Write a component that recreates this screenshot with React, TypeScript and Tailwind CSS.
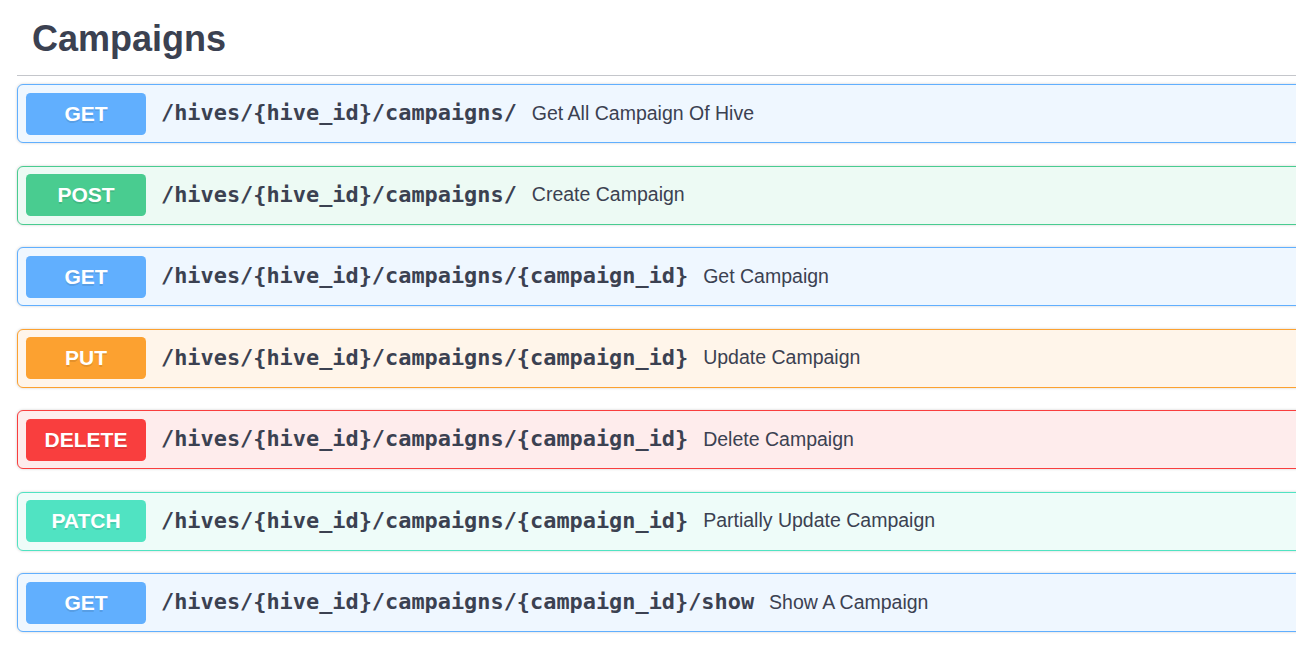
const ops = [
  {
    method: "GET",
    path: "/hives/{hive_id}/campaigns/",
    summary: "Get All Campaign Of Hive",
    box: "border-[#61affe] bg-[#eff7ff]",
    badge: "bg-[#61affe]",
  },
  {
    method: "POST",
    path: "/hives/{hive_id}/campaigns/",
    summary: "Create Campaign",
    box: "border-[#49cc90] bg-[#edfaf4]",
    badge: "bg-[#49cc90]",
  },
  {
    method: "GET",
    path: "/hives/{hive_id}/campaigns/{campaign_id}",
    summary: "Get Campaign",
    box: "border-[#61affe] bg-[#eff7ff]",
    badge: "bg-[#61affe]",
  },
  {
    method: "PUT",
    path: "/hives/{hive_id}/campaigns/{campaign_id}",
    summary: "Update Campaign",
    box: "border-[#fca130] bg-[#fff5ea]",
    badge: "bg-[#fca130]",
  },
  {
    method: "DELETE",
    path: "/hives/{hive_id}/campaigns/{campaign_id}",
    summary: "Delete Campaign",
    box: "border-[#f93e3e] bg-[#feecec]",
    badge: "bg-[#f93e3e]",
  },
  {
    method: "PATCH",
    path: "/hives/{hive_id}/campaigns/{campaign_id}",
    summary: "Partially Update Campaign",
    box: "border-[#50e3c2] bg-[#eefcf9]",
    badge: "bg-[#50e3c2]",
  },
  {
    method: "GET",
    path: "/hives/{hive_id}/campaigns/{campaign_id}/show",
    summary: "Show A Campaign",
    box: "border-[#61affe] bg-[#eff7ff]",
    badge: "bg-[#61affe]",
  },
];

export default function App() {
  return (
    <div className="min-h-screen w-full overflow-hidden bg-white text-[#3b4151]">
      <div className="w-[1340px] pl-[17px]">
        {/* Tag header */}
        <div className="border-b border-[#c4c6cb] pt-[18px] pb-[16px] pl-[15px]">
          <h3 className="text-[36px] leading-[41px] font-bold font-['Liberation_Sans',Arial,sans-serif]">
            Campaigns
          </h3>
        </div>

        {/* Operations */}
        <div className="mt-[8px] flex flex-col gap-[22.5px]">
          {ops.map((op, i) => (
            <div
              key={i}
              className={`flex h-[59px] items-center rounded-[6px] border pl-[8px] shadow-[0_0_3px_rgba(0,0,0,0.19)] ${op.box}`}
            >
              <span
                className={`flex h-[42px] w-[120px] shrink-0 items-center justify-center rounded-[4.5px] text-[21px] font-bold text-white font-['Liberation_Sans',Arial,sans-serif] [text-shadow:0_1.5px_0_rgba(0,0,0,0.1)] ${op.badge}`}
              >
                {op.method}
              </span>
              <span className="px-[15px] text-[21.9px] font-bold font-['DejaVu_Sans_Mono',monospace] whitespace-nowrap">
                {op.path}
              </span>
              <span className="text-[19.5px] font-['Liberation_Sans',Arial,sans-serif] whitespace-nowrap">
                {op.summary}
              </span>
            </div>
          ))}
        </div>
      </div>
    </div>
  );
}
